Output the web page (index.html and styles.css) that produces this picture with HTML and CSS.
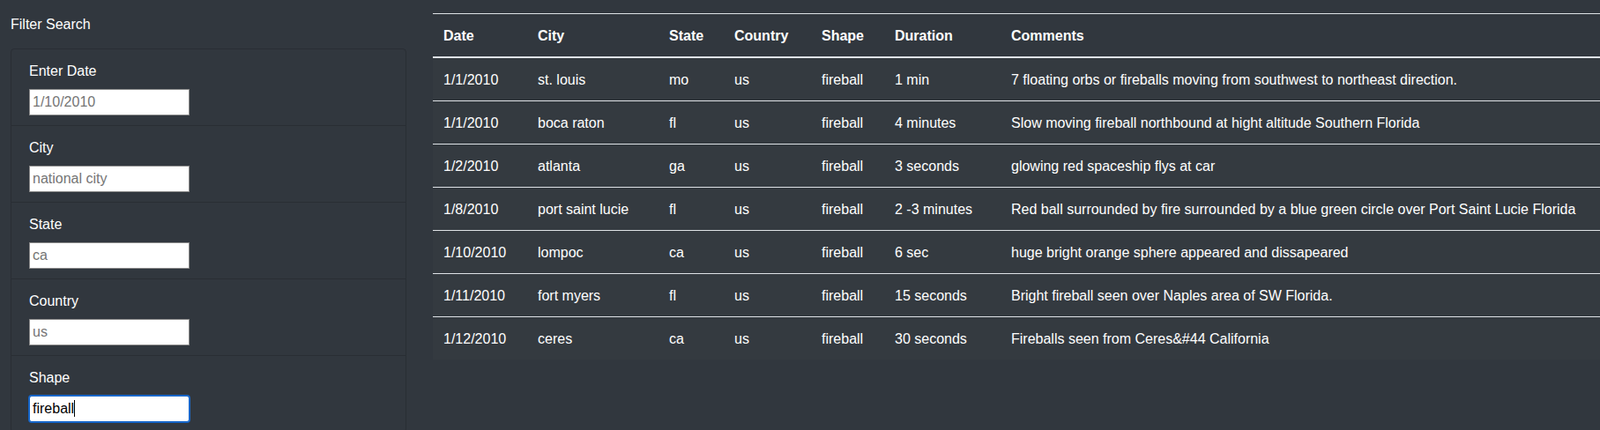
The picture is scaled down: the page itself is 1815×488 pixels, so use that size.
FILE: index.html
```html
<!DOCTYPE html>
<html lang="en">
<head>
<meta charset="utf-8">
<title>UFO Sightings – Filter Search</title>
<link rel="stylesheet" href="styles.css">
</head>
<body>
<div class="page">
  <aside class="sidebar">
    <div class="sidebar-title">Filter Search</div>
    <ul class="filter-list">
      <li class="filter-item">
        <label class="filter-label" for="datetime">Enter Date</label>
        <input class="filter-input" id="datetime" type="text" placeholder="1/10/2010">
      </li>
      <li class="filter-item">
        <label class="filter-label" for="city">City</label>
        <input class="filter-input" id="city" type="text" placeholder="national city">
      </li>
      <li class="filter-item">
        <label class="filter-label" for="state">State</label>
        <input class="filter-input" id="state" type="text" placeholder="ca">
      </li>
      <li class="filter-item">
        <label class="filter-label" for="country">Country</label>
        <input class="filter-input" id="country" type="text" placeholder="us">
      </li>
      <li class="filter-item">
        <label class="filter-label" for="shape">Shape</label>
        <span class="input-wrap">
          <input class="filter-input is-focused" id="shape" type="text" value="fireball">
          <span class="caret"></span>
        </span>
      </li>
    </ul>
  </aside>
  <main class="main">
    <table class="ufo-table">
      <colgroup>
        <col class="c-date">
        <col class="c-city">
        <col class="c-state">
        <col class="c-country">
        <col class="c-shape">
        <col class="c-duration">
        <col class="c-comments">
      </colgroup>
      <thead>
        <tr>
          <th>Date</th>
          <th>City</th>
          <th>State</th>
          <th>Country</th>
          <th>Shape</th>
          <th>Duration</th>
          <th>Comments</th>
        </tr>
      </thead>
      <tbody>
        <tr><td>1/1/2010</td><td>st. louis</td><td>mo</td><td>us</td><td>fireball</td><td>1 min</td><td>7 floating orbs or fireballs moving from southwest to northeast direction.</td></tr>
        <tr><td>1/1/2010</td><td>boca raton</td><td>fl</td><td>us</td><td>fireball</td><td>4 minutes</td><td>Slow moving fireball northbound at hight altitude Southern Florida</td></tr>
        <tr><td>1/2/2010</td><td>atlanta</td><td>ga</td><td>us</td><td>fireball</td><td>3 seconds</td><td>glowing red spaceship flys at car</td></tr>
        <tr><td>1/8/2010</td><td>port saint lucie</td><td>fl</td><td>us</td><td>fireball</td><td>2 -3 minutes</td><td>Red ball surrounded by fire surrounded by a blue green circle over Port Saint Lucie Florida</td></tr>
        <tr><td>1/10/2010</td><td>lompoc</td><td>ca</td><td>us</td><td>fireball</td><td>6 sec</td><td>huge bright orange sphere appeared and dissapeared</td></tr>
        <tr><td>1/11/2010</td><td>fort myers</td><td>fl</td><td>us</td><td>fireball</td><td>15 seconds</td><td>Bright fireball seen over Naples area of SW Florida.</td></tr>
        <tr><td>1/12/2010</td><td>ceres</td><td>ca</td><td>us</td><td>fireball</td><td>30 seconds</td><td>Fireballs seen from Ceres&amp;#44 California</td></tr>
      </tbody>
    </table>
  </main>
</div>
</body>
</html>
```
FILE: styles.css
```css
html, body {
  margin: 0;
  padding: 0;
  background: #31373e;
}

body {
  font-family: "Liberation Sans", Arial, Helvetica, sans-serif;
  font-size: 16px;
  line-height: 24px;
  color: #ffffff;
}

.page {
  display: flex;
  align-items: flex-start;
  padding-left: 12px;
  gap: 30px;
}

.sidebar {
  flex: 0 0 449px;
  width: 449px;
  padding-top: 16px;
}

.sidebar-title {
  margin-bottom: 15px;
}

.filter-list {
  list-style: none;
  margin: 0;
  padding: 0;
  border: 1px solid rgba(0, 0, 0, 0.16);
  border-radius: 4px;
}

.filter-item {
  padding: 13px 20px 11px;
  border-top: 1px solid rgba(0, 0, 0, 0.16);
}

.filter-item:first-child {
  border-top: 0;
}

.filter-label {
  display: block;
  margin-bottom: 8px;
}

.filter-input {
  display: block;
  box-sizing: border-box;
  width: 182px;
  height: 30px;
  margin: 0;
  padding: 0 3px;
  border: 1px solid #8a8a8a;
  border-radius: 0;
  background: #ffffff;
  font-family: "Liberation Sans", Arial, Helvetica, sans-serif;
  font-size: 16px;
  line-height: 24px;
  color: #000000;
  outline: none;
}

.filter-input::placeholder {
  color: #757575;
  opacity: 1;
}

.filter-input.is-focused {
  border-color: #1565c8;
  border-radius: 3px;
  box-shadow: 0 0 0 1px #1565c8;
}

.input-wrap {
  position: relative;
  display: block;
  width: 182px;
}

.caret {
  position: absolute;
  left: 51px;
  top: 5px;
  width: 1px;
  height: 19px;
  background: #000000;
}

.main {
  flex: 1 1 auto;
  min-width: 0;
  padding-top: 15px;
}

.ufo-table {
  width: 100%;
  border-collapse: collapse;
  table-layout: fixed;
}

.c-date { width: 107px; }
.c-city { width: 149px; }
.c-state { width: 74px; }
.c-country { width: 99px; }
.c-shape { width: 83px; }
.c-duration { width: 132px; }
.c-comments { width: auto; }

.ufo-table th,
.ufo-table td {
  padding: 13px 12px 11px;
  text-align: left;
  vertical-align: top;
  white-space: nowrap;
}

.ufo-table th {
  font-weight: bold;
  border-top: 1px solid #dee2e6;
  border-bottom: 2px solid #dee2e6;
}

.ufo-table td {
  background: #343a40;
  border-top: 1px solid #dee2e6;
}
```
